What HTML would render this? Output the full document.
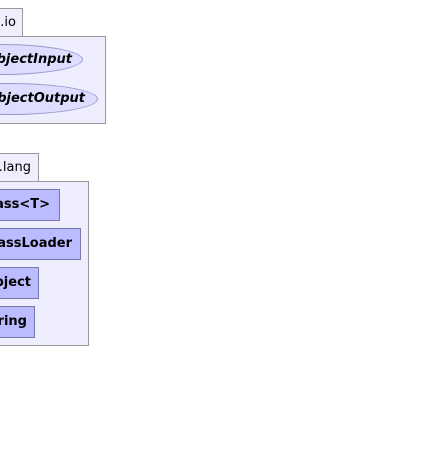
<html><head><style>
body{margin:0;width:421px;height:472px;background:#fff;position:relative;overflow:hidden;font-family:"DejaVu Sans","Liberation Sans",sans-serif;}
#w{position:absolute;left:0;top:0;width:421px;height:472px;overflow:hidden;}
#w div{position:absolute;box-sizing:border-box;}
.pk{background:#eeeeff;border:1px solid #999;}
.t{font-size:13px;color:#000;white-space:nowrap;text-align:right;}
.b{font-weight:bold;}
.el{background:#ddddff;border:1px solid #9999cc;border-radius:50%;}
.cl{background:#bbbbff;border:1px solid #7777aa;}
</style></head><body><div id="w">
<div class="pk" style="left:-40px;top:8px;width:63px;height:29px;"></div>
<div class="pk" style="left:-40px;top:36px;width:146px;height:88px;"></div>
<div class="t" style="right:405px;top:15px;">java.io</div>
<div class="el" style="left:-80px;top:44px;width:163px;height:31px;"></div>
<div class="t b" style="right:349px;top:52px;font-style:italic;">ObjectInput</div>
<div class="el" style="left:-80px;top:83px;width:178px;height:32px;"></div>
<div class="t b" style="right:336px;top:91px;font-style:italic;">ObjectOutput</div>

<div class="pk" style="left:-40px;top:153px;width:79px;height:29px;"></div>
<div class="pk" style="left:-40px;top:181px;width:129px;height:165px;"></div>
<div class="t" style="right:390px;top:160px;">java.lang</div>
<div class="cl" style="left:-40px;top:189px;width:100px;height:32px;"></div>
<div class="t b" style="right:371px;top:197px;">Class&lt;T&gt;</div>
<div class="cl" style="left:-40px;top:228px;width:121px;height:32px;"></div>
<div class="t b" style="right:349px;top:236px;">ClassLoader</div>
<div class="cl" style="left:-40px;top:267px;width:79px;height:32px;"></div>
<div class="t b" style="right:390px;top:275px;">Object</div>
<div class="cl" style="left:-40px;top:306px;width:75px;height:32px;"></div>
<div class="t b" style="right:394px;top:314px;">String</div>
</div></body></html>
